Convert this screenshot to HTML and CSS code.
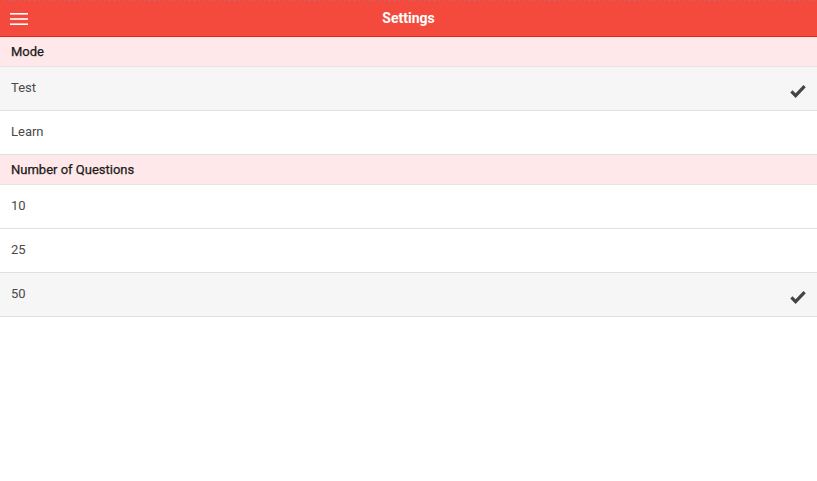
FILE: index.html
```html
<!DOCTYPE html>
<html>
<head>
<meta charset="utf-8">
<link rel="stylesheet" href="styles.css">
</head>
<body>
<div class="app">
  <header class="bar">
    <div class="dots"></div>
    <div class="bar-inner">
      <span class="menu">
        <svg width="18" height="12" viewBox="0 0 18 12"><rect x="0" y="0" width="18" height="1.6" fill="#fff"/><rect x="0" y="5.2" width="18" height="1.6" fill="#fff"/><rect x="0" y="10.4" width="18" height="1.6" fill="#fff"/></svg>
      </span>
      <span class="title">Settings</span>
    </div>
  </header>
  <div class="section">Mode</div>
  <div class="row selected"><span>Test</span><svg class="check" width="16" height="14" viewBox="0 0 16 14"><path d="M1.4 7.4 L5.6 11.6 L14.6 2.2" fill="none" stroke="#444" stroke-width="3.2" stroke-linejoin="miter"/></svg></div>
  <div class="row"><span>Learn</span></div>
  <div class="section">Number of Questions</div>
  <div class="row"><span>10</span></div>
  <div class="row"><span>25</span></div>
  <div class="row selected"><span>50</span><svg class="check" width="16" height="14" viewBox="0 0 16 14"><path d="M1.4 7.4 L5.6 11.6 L14.6 2.2" fill="none" stroke="#444" stroke-width="3.2" stroke-linejoin="miter"/></svg></div>
</div>
</body>
</html>
```
FILE: styles.css
```css
html, body { margin: 0; padding: 0; background: #fff; }
body { font-family: Roboto, "Noto Sans", sans-serif; }
.app { width: 817px; }
.bar { background: #f44a3e; border-bottom: 1px solid #e3261a; height: 36px; display: flex; flex-direction: column; }
.dots { height: 1px; background: repeating-linear-gradient(90deg, #f44a3e 0 4px, #888 4px 5px); }
.bar-inner { flex: 1; position: relative; display: flex; align-items: center; justify-content: center; }
.menu { position: absolute; left: 10px; top: 12px; display: flex; }
.title { color: #fff; font-weight: 700; font-size: 14px; margin-top: -1px; }
.section { background: #ffe8e9; height: 29px; border-bottom: 1px solid #e8e4e4; display: flex; align-items: center; padding: 0 11px 1px; box-sizing: border-box; height: 30px; font-size: 13px; color: #1a1a1a; font-weight: 400; -webkit-text-stroke: 0.25px #1a1a1a; }
.row { height: 44px; box-sizing: border-box; border-bottom: 1px solid #e0e0e0; display: flex; align-items: center; justify-content: space-between; padding: 0 11px 2px; font-size: 13px; color: #4a4a4a; background: #fff; }
.row.selected { background: #f6f6f6; }
.check { margin-top: 6px; }
```
